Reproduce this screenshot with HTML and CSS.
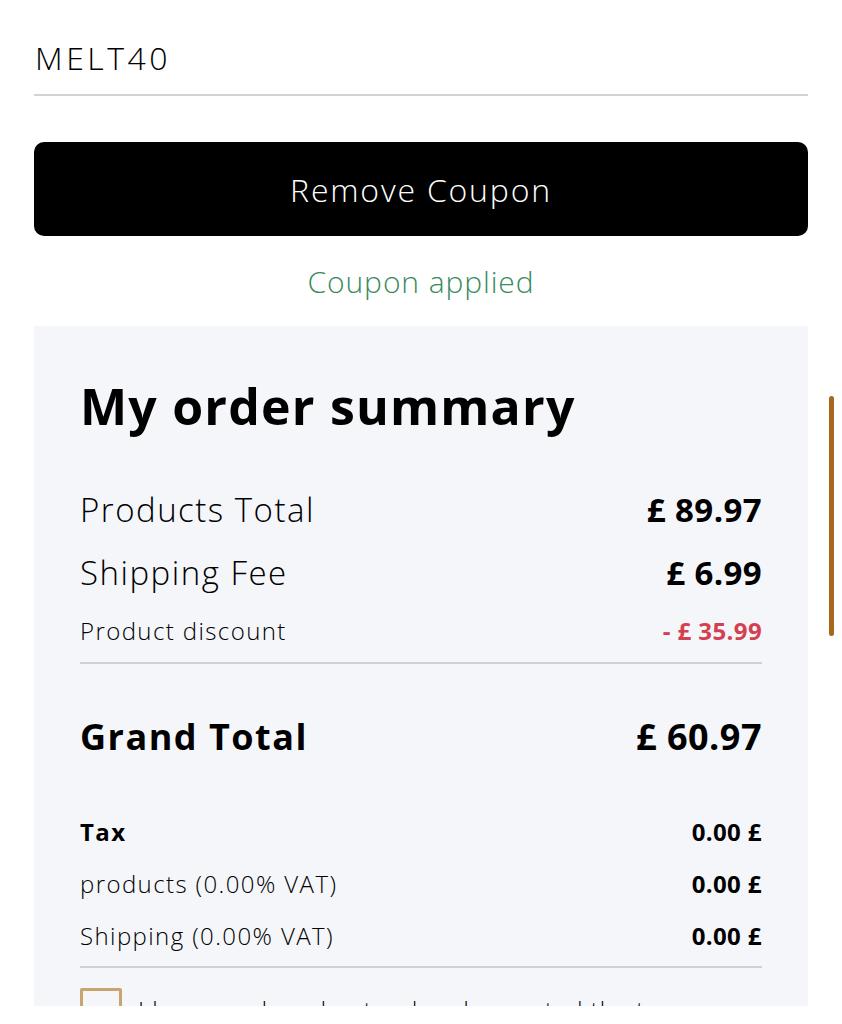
FILE: index.html
```html
<!DOCTYPE html>
<html lang="en">
<head>
<meta charset="utf-8">
<title>Checkout</title>
<link rel="stylesheet" href="styles.css">
</head>
<body>
<div class="page">
  <div class="coupon-field">MELT40</div>
  <button class="coupon-btn">Remove Coupon</button>
  <p class="coupon-msg">Coupon applied</p>

  <section class="summary">
    <h1 class="summary-title">My order summary</h1>
    <div class="row row-lg"><span>Products Total</span><span class="val">£ 89.97</span></div>
    <div class="row row-lg"><span>Shipping Fee</span><span class="val">£ 6.99</span></div>
    <div class="row row-sm row-disc"><span>Product discount</span><span class="val discount">- £ 35.99</span></div>
    <hr class="divider">
    <div class="row row-grand"><span>Grand Total</span><span>£ 60.97</span></div>
    <div class="tax">
      <div class="row row-sm row-tax"><span class="bold">Tax</span><span class="val">0.00 £</span></div>
      <div class="row row-sm row-tax"><span>products (0.00% VAT)</span><span class="val">0.00 £</span></div>
      <div class="row row-sm row-tax"><span>Shipping (0.00% VAT)</span><span class="val">0.00 £</span></div>
    </div>
    <hr class="divider divider-tax">
    <label class="terms"><span class="checkbox"></span><span class="terms-text">I have read, understood and accepted the terms</span></label>
  </section>
</div>
<div class="bottom-bar"></div>
<div class="scroll-thumb"></div>
</body>
</html>
```
FILE: styles.css
```css
html, body {
  margin: 0;
  padding: 0;
  background: #ffffff;
}
body {
  font-family: "Open Sans", "Liberation Sans", sans-serif;
  color: #000;
  overflow: hidden;
  height: 1024px;
}
.page {
  padding: 0 34px;
}
.coupon-field {
  font-size: 32px;
  font-weight: 300;
  letter-spacing: 3.5px;
  line-height: 40px;
  padding: 38px 0 16px 1px;
  border-bottom: 2px solid #d2d2d2;
}
.coupon-btn {
  display: block;
  width: 100%;
  height: 94px;
  margin-top: 46px;
  border: none;
  border-radius: 10px;
  background: #000;
  color: #fff;
  font-family: inherit;
  font-size: 32px;
  font-weight: 300;
  letter-spacing: 1.8px;
}
.coupon-msg {
  margin: 28px 0 0;
  text-align: center;
  color: #3a8a5c;
  font-size: 30px;
  font-weight: 300;
  letter-spacing: 0.9px;
  line-height: 36px;
}
.summary {
  margin-top: 26px;
  background: #f5f6fa;
  padding: 50px 46px 40px;
}
.summary-title {
  margin: 0 0 54px;
  font-size: 50px;
  font-weight: 700;
  letter-spacing: 1.2px;
  line-height: 60px;
}
.row {
  display: flex;
  justify-content: space-between;
  align-items: center;
}
.row .val { font-weight: 700; }
.row-lg {
  font-size: 33px;
  font-weight: 300;
  letter-spacing: 1.5px;
  line-height: 40px;
  margin-bottom: 23px;
}
.row-sm {
  font-size: 24px;
  font-weight: 300;
  letter-spacing: 1.4px;
  line-height: 30px;
}
.row-lg .val, .row-sm .val { letter-spacing: 0.4px; }
.row-disc { margin-top: 7px; }
.discount { color: #d4404f; }
.divider {
  border: none;
  border-top: 2px solid #cfd0d4;
  margin: 16px 0 0;
}
.divider-tax { margin-top: 15px; }
.row-grand {
  font-size: 36px;
  font-weight: 700;
  letter-spacing: 1.5px;
  line-height: 44px;
  margin-top: 51px;
}
.row-grand span:last-child { letter-spacing: 0.5px; }
.tax {
  margin-top: 58px;
  display: flex;
  flex-direction: column;
  gap: 22px;
}
.bold { font-weight: 700; }
.terms {
  display: flex;
  align-items: flex-start;
  gap: 16px;
  margin-top: 20px;
  font-size: 24px;
  font-weight: 300;
  letter-spacing: 1px;
}
.checkbox {
  width: 36px;
  height: 36px;
  border: 3px solid #c8a46e;
  border-radius: 2px;
  flex: none;
}
.terms-text {
  padding-top: 5px;
}
.bottom-bar {
  position: fixed;
  left: 0;
  right: 0;
  bottom: 0;
  height: 18px;
  background: #fff;
}
.scroll-thumb {
  position: fixed;
  left: 829px;
  top: 396px;
  width: 5px;
  height: 240px;
  border-radius: 3px;
  background: #a8671c;
}
```
